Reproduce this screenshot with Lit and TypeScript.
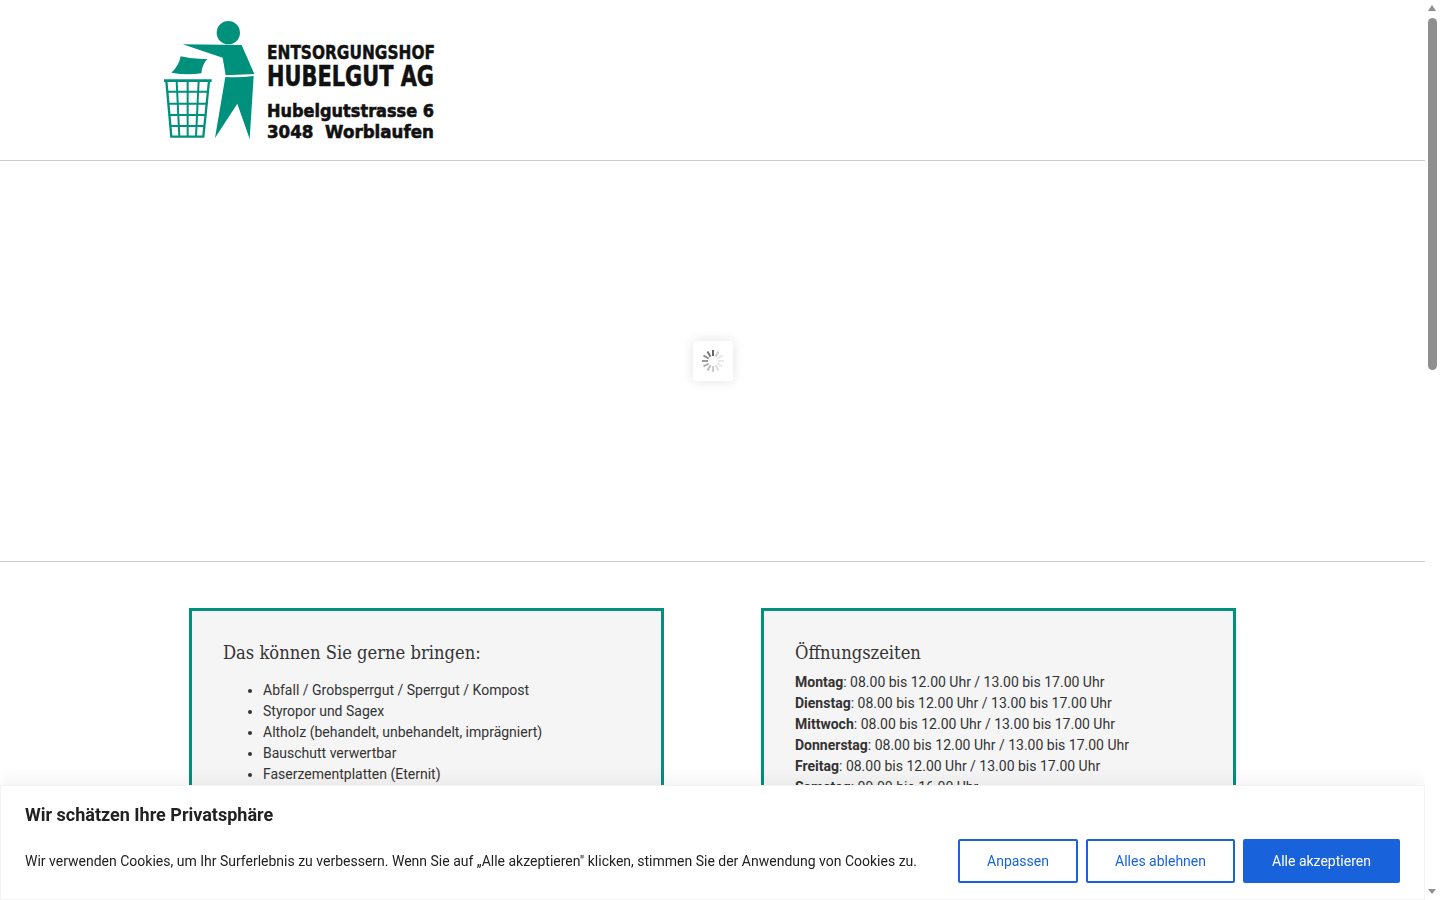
import { LitElement, html, css, svg } from "lit";
import { customElement } from "lit/decorators.js";

const TEAL = "#00917c";

const spinner = () => {
  const greys = ["#666", "#ccc", "#e4e4e4", "#e8e8e8", "#e8e8e8", "#ddd", "#ccc", "#bbb", "#aaa", "#999", "#888", "#777"];
  return html`<svg class="spin" width="24" height="24" viewBox="0 0 24 24">
    ${greys.map((g, i) => svg`<line x1="12" y1="1" x2="12" y2="7" stroke=${g} stroke-width="2" transform="rotate(${i * 30} 12 12)"></line>`)}
  </svg>`;
};

@customElement("app-root")
export class AppRoot extends LitElement {
  static styles = css`
    :host { display: block; height: 900px; overflow: hidden; position: relative; background: #fff;
      font-family: Roboto, "Liberation Sans", sans-serif; font-size: 14px; line-height: 21px; color: #333; }
    .page { width: 1425px; }
    header { border-bottom: 1px solid #ccc; padding: 15px 0 0 160px; height: 145px; }
    .logo { display: block; }
    .hero { height: 400px; border-bottom: 1px solid #ccc; display: flex; align-items: center; justify-content: center; }
    .loader { width: 40px; height: 40px; background: #fff; box-shadow: 0 0 12px rgba(0,0,0,.12); display: flex; align-items: center; justify-content: center; border-radius: 2px; }
    .cols { display: grid; grid-template-columns: 475px 475px; column-gap: 97px; padding: 46px 0 0 189px; }
    .card { border: 3px solid #00917c; background: #f5f5f5; padding: 29px 31px 30px; height: 400px; box-sizing: border-box; }
    h3 { margin: 0 0 6px; font-family: "Roboto Slab", "DejaVu Serif Condensed", "DejaVu Serif", serif; font-weight: 400; font-size: 18.2px; line-height: 26px; color: #333; }
    ul { margin: 14px 0 0; padding: 0 0 0 40px; }
    li { line-height: 21px; }
    .hours { margin-top: 6px; }
    .hours b { font-weight: 700; }
    .banner { position: fixed; left: 0; bottom: 0; width: 1425px; height: 115px; box-sizing: border-box; background: #fff;
      padding: 18px 24px 0 24px; border: 1px solid #f4f4f4; box-shadow: 0 -6px 14px rgba(0,0,0,.05); color: #212121; }
    .banner h2 { margin: 0; font-size: 18px; font-weight: 700; line-height: 22px; color: #212121; }
    .row { display: flex; align-items: center; justify-content: space-between; margin-top: 13px; }
    .btns { display: flex; gap: 8px; }
    button { font: 400 14px/20px Roboto, "Liberation Sans", sans-serif; height: 44px; border-radius: 2px; border: 2px solid #1863dc; background: #fff; color: #1863dc; padding: 0; }
    .a { width: 120px; } .b { width: 149px; } .c { width: 157px; background: #1863dc; color: #fff; }
    .sb { position: fixed; right: 0; top: 0; width: 15px; height: 900px; background: #fff; }
    .thumb { position: absolute; left: 3px; top: 18px; width: 9px; height: 352px; background: #8f8f8f; border-radius: 5px; }
    .up, .down { position: absolute; left: 3px; width: 0; height: 0; border-left: 4.5px solid transparent; border-right: 4.5px solid transparent; }
    .up { top: 5px; border-bottom: 6px solid #8f8f8f; }
    .down { bottom: 6px; border-top: 5px solid #8f8f8f; }
  `;

  render() {
    const hours: [string, string][] = [
      ["Montag", "08.00 bis 12.00 Uhr / 13.00 bis 17.00 Uhr"],
      ["Dienstag", "08.00 bis 12.00 Uhr / 13.00 bis 17.00 Uhr"],
      ["Mittwoch", "08.00 bis 12.00 Uhr / 13.00 bis 17.00 Uhr"],
      ["Donnerstag", "08.00 bis 12.00 Uhr / 13.00 bis 17.00 Uhr"],
      ["Freitag", "08.00 bis 12.00 Uhr / 13.00 bis 17.00 Uhr"],
      ["Samstag", "09.00 bis 16.00 Uhr"],
    ];
    const items = ["Abfall / Grobsperrgut / Sperrgut / Kompost", "Styropor und Sagex", "Altholz (behandelt, unbehandelt, imprägniert)", "Bauschutt verwertbar", "Faserzementplatten (Eternit)"];
    return html`
      <div class="page">
        <header>
          <svg class="logo" width="420" height="130" viewBox="0 0 420 130">
            <g fill=${TEAL} transform="scale(.3333) translate(0 3)">
              <circle cx="205" cy="50" r="35"></circle>
              <path d="M68 85 L245 87 L283 174 L197 178 L188 125 Z"></path>
              <path d="M196 183 Q240 186 281 180 L269 369 L232 263 L165 366 Z"></path>
              <path d="M62 121 Q100 131 142 129 Q126 146 124 172 Q80 178 34 170 Q56 152 62 121 Z"></path>
            </g>
            <g fill="none" stroke=${TEAL} transform="scale(.3333) translate(0 3)">
              <path d="M12 194 H155" stroke-width="8"></path>
              <path d="M19 195 L34 362 H130 L147 195" stroke-width="7"></path>
              <path d="M21 227 H145 M24 263 H142 M27 297 H139 M31 330 H135" stroke-width="6"></path>
              <path d="M50 195 L58 362 M83 195 V362 M116 195 L108 362" stroke-width="6"></path>
            </g>
            <g font-family="DejaVu Sans" font-weight="700" fill="#111" stroke="#111">
              <text x="107" y="44" font-size="20" stroke-width=".5" textLength="168" lengthAdjust="spacingAndGlyphs">ENTSORGUNGSHOF</text>
              <text x="107" y="71" font-size="28" stroke-width=".6" textLength="167" lengthAdjust="spacingAndGlyphs">HUBELGUT AG</text>
              <text x="107" y="102" font-size="18.5" stroke-width=".6" textLength="167" lengthAdjust="spacingAndGlyphs">Hubelgutstrasse 6</text>
              <text x="107" y="123" font-size="18" stroke-width=".6" textLength="167" lengthAdjust="spacingAndGlyphs" xml:space="preserve">3048  Worblaufen</text>
            </g>
          </svg>
        </header>
        <section class="hero"><div class="loader">${spinner()}</div></section>
        <section class="cols">
          <article class="card">
            <h3>Das können Sie gerne bringen:</h3>
            <ul>${items.map((t) => html`<li>${t}</li>`)}</ul>
          </article>
          <article class="card">
            <h3>Öffnungszeiten</h3>
            <div class="hours">${hours.map(([d, t]) => html`<div><b>${d}</b>: ${t}</div>`)}</div>
          </article>
        </section>
      </div>
      <aside class="banner">
        <h2>Wir schätzen Ihre Privatsphäre</h2>
        <div class="row">
          <span>Wir verwenden Cookies, um Ihr Surferlebnis zu verbessern. Wenn Sie auf „Alle akzeptieren" klicken, stimmen Sie der Anwendung von Cookies zu.</span>
          <div class="btns">
            <button class="a">Anpassen</button><button class="b">Alles ablehnen</button><button class="c">Alle akzeptieren</button>
          </div>
        </div>
      </aside>
      <div class="sb"><div class="up"></div><div class="thumb"></div><div class="down"></div></div>
    `;
  }
}
